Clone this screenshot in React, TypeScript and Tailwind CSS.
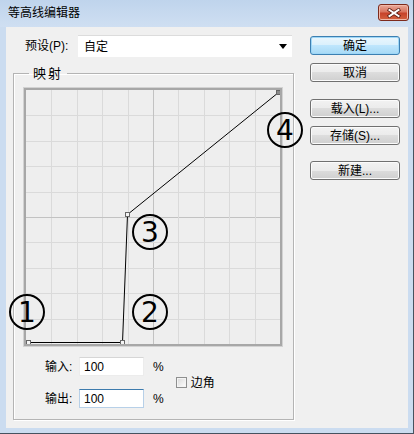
import React from "react";

function Btn({ children, def }: { children: React.ReactNode; def?: boolean }) {
  return (
    <div
      className={
        def
          ? "h-[19px] w-[90px] rounded-[3px] border border-[#3c7fb1] bg-[linear-gradient(to_bottom,#eaf6fd_0%,#d9f0fc_50%,#bee6fd_50%,#a7d9f5_100%)] shadow-[inset_0_0_0_1px_#9ed7f7] flex items-center justify-center text-[12px] leading-none text-black"
          : "h-[19px] w-[90px] rounded-[3px] border border-[#707070] bg-[linear-gradient(to_bottom,#f2f2f2_0%,#ebebeb_50%,#dddddd_50%,#cfcfcf_100%)] shadow-[inset_0_0_0_1px_#fbfbfb] flex items-center justify-center text-[12px] leading-none text-black"
      }
    >
      {children}
    </div>
  );
}

function Circled({ n, left, top }: { n: string; left: number; top: number }) {
  return (
    <div
      className="absolute w-[36px] h-[36px] rounded-full border-2 border-black flex items-center justify-center text-[28px] leading-none font-['DejaVu_Sans',sans-serif] text-black"
      style={{ left, top }}
    >
      <span className="mt-[1px]">{n}</span>
    </div>
  );
}

function Graph() {
  const step = 254 / 10;
  const lines = [];
  for (let i = 1; i < 10; i++) {
    const p = Math.round(i * step) + 0.5;
    const c = i === 5 ? "#c2c2c2" : "#dadada";
    lines.push(<line key={"v" + i} x1={p} y1={0} x2={p} y2={254} stroke={c} strokeWidth={1} />);
    lines.push(<line key={"h" + i} x1={0} y1={p} x2={254} y2={p} stroke={c} strokeWidth={1} />);
  }
  const pts: [number, number][] = [
    [2, 252],
    [96, 252],
    [101, 124],
    [252, 2],
  ];
  return (
    <div className="mt-[5px] ml-[9px] w-[260px] h-[260px] border border-[#d2d2d2]">
      <div className="w-[258px] h-[258px] border-2 border-[#a7a7a7] bg-[#eeeeee]">
        <svg width="254" height="254" viewBox="0 0 254 254" shapeRendering="crispEdges">
          {lines}
          <polyline
            points={pts.map((p) => `${p[0] + 0.5},${p[1] + 0.5}`).join(" ")}
            fill="none"
            stroke="#000"
            strokeWidth={1}
            shapeRendering="auto"
          />
          {pts.map((p, i) => (
            <rect
              key={i}
              x={p[0] - 2 + 0.5}
              y={p[1] - 2 + 0.5}
              width={4}
              height={4}
              fill={i === 3 ? "#8a8a8a" : "#f4f4f4"}
              stroke="#666"
              strokeWidth={1}
            />
          ))}
        </svg>
      </div>
    </div>
  );
}

function ValueRow({ label, focus }: { label: string; focus?: boolean }) {
  return (
    <div className="flex items-center h-[19px]">
      <span className="w-[34px] text-[12px] leading-none">{label}</span>
      <div
        className={
          focus
            ? "w-[65px] h-[19px] bg-white border border-[#b7d0e8] border-t-[#3d7bad] flex items-center pl-[4px] text-[12px] leading-none"
            : "w-[65px] h-[19px] bg-white border border-[#ececec] border-t-[#d6d6d6] flex items-center pl-[4px] text-[12px] leading-none"
        }
      >
        100
      </div>
      <span className="ml-[9px] text-[12px] leading-none">%</span>
    </div>
  );
}

export default function App() {
  return (
    <div className="w-[414px] h-[434px] overflow-hidden bg-[#cbdcf0] border-r border-b border-[#46525f] flex flex-col font-['Liberation_Sans','Noto_Sans_CJK_SC',sans-serif] text-black">
      {/* Title bar */}
      <div className="h-[27px] flex items-start justify-between pl-[8px] bg-[linear-gradient(to_bottom,#bfd4ec,#cfdff2)]">
        <span className="mt-[5px] text-[12px] leading-[14px] font-['Noto_Sans_CJK_SC',sans-serif]">等高线编辑器</span>
        <div className="mt-[4px] mr-[4px] w-[31px] h-[17px] rounded-[3px] border border-[#7d2a1c] bg-[linear-gradient(to_bottom,#e9a99b_0%,#d9755f_45%,#c7432a_55%,#d4623f_100%)] shadow-[inset_0_0_0_1px_#f0b8a8] flex items-center justify-center">
          <svg width="14" height="10" viewBox="-7 -5 14 10">
            <path d="M-4.5 -3 L4.5 3 M4.5 -3 L-4.5 3" stroke="#5b1d12" strokeWidth="3.6" strokeLinecap="square" />
            <path d="M-4.5 -3 L4.5 3 M4.5 -3 L-4.5 3" stroke="#ffffff" strokeWidth="2" strokeLinecap="square" />
          </svg>
        </div>
      </div>

      {/* Content */}
      <div className="relative ml-[6px] w-[402px] h-[401px] bg-[#f0f0f0] flex text-[12px]">
        {/* Left panel */}
        <div className="w-[294px] flex flex-col">
          <div className="mt-[8px] h-[22px] flex items-center pl-[19px]">
            <span className="w-[53px] text-[12px] leading-none">预设(P):</span>
            <div className="w-[214px] h-[22px] bg-white border-t border-[#dcdcdc] flex items-center justify-between pl-[6px] pr-[5px]">
              <span className="text-[12px] leading-none">自定</span>
              <svg width="8" height="5" viewBox="0 0 8 5">
                <path d="M0 0 H8 L4 5 Z" fill="#000" />
              </svg>
            </div>
          </div>

          <fieldset className="mt-[8px] ml-[7px] w-[281px] h-[355px] border border-[#b4b4b4] shadow-[inset_1px_1px_0_#ffffff,1px_1px_0_#ffffff]">
            <legend className="ml-[15px] px-[4px] text-[13px] leading-[17px] tracking-[2px]">映射</legend>
            <Graph />
            <div className="mt-[10px] flex items-center">
              <div className="ml-[31px] flex flex-col gap-[13px]">
                <ValueRow label="输入:" />
                <ValueRow label="输出:" focus />
              </div>
              <div className="ml-[12px] flex items-center gap-[4px]">
                <div className="w-[11px] h-[11px] border border-[#8e8f8f] bg-[linear-gradient(135deg,#d8d8d8,#ffffff)] shadow-[inset_0_0_0_1px_#f4f4f4]" />
                <span className="text-[12px] leading-none">边角</span>
              </div>
            </div>
          </fieldset>
        </div>

        {/* Right panel */}
        <div className="ml-[10px] pt-[9px] flex flex-col">
          <Btn def>确定</Btn>
          <div className="h-[8px]" />
          <Btn>取消</Btn>
          <div className="h-[17px]" />
          <Btn>载入(L)...</Btn>
          <div className="h-[8px]" />
          <Btn>存储(S)...</Btn>
          <div className="h-[16px]" />
          <Btn>新建...</Btn>
        </div>

        {/* Annotations */}
        <Circled n="1" left={3} top={267} />
        <Circled n="2" left={126} top={267} />
        <Circled n="3" left={126} top={187} />
        <Circled n="4" left={261} top={85} />
      </div>
    </div>
  );
}
